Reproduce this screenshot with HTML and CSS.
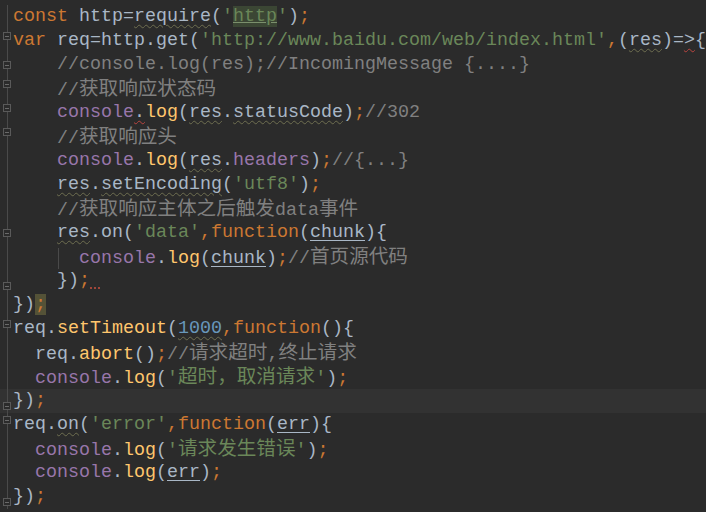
FILE: index.html
```html
<!DOCTYPE html>
<html lang="zh-CN">
<head>
  <meta charset="UTF-8">
  <title>http.get 示例</title>
  <link rel="stylesheet" href="styles.css">
</head>
<body>
  <div class="editor">
    <div class="ln"><span class="gut"></span><span class="code"><span class="kw">const </span>http=<span class="warn">require</span>(<span class="str">'<span class="hit">http</span>'</span>)<span class="kw">;</span></span></div>
    <div class="ln"><span class="gut top"><i class="fold"></i></span><span class="code"><span class="kw">var </span>req=http.get(<span class="str">'http://www.baidu.com/web/index.html'</span><span class="kw">,</span>(<span class="warn">res</span>)=<span class="err">&gt;</span>{</span></div>
    <div class="ln"><span class="gut mid"><i class="fold"></i></span><span class="code">    <span class="cm">//console.log(res);//IncomingMessage {....}</span></span></div>
    <div class="ln"><span class="gut top"><i class="fold"></i></span><span class="code">    <span class="cm">//<span class="zh">获取响应状态码</span></span></span></div>
    <div class="ln"><span class="gut top"><i class="fold"></i></span><span class="code">    <span class="obj">console</span><span class="err">.</span><span class="fn">log</span>(<span class="warn">res</span>.<span class="warn">statusCode</span>)<span class="kw">;</span><span class="cm">//302</span></span></div>
    <div class="ln"><span class="gut top"><i class="fold"></i></span><span class="code">    <span class="cm">//<span class="zh">获取响应头</span></span></span></div>
    <div class="ln"><span class="gut"></span><span class="code">    <span class="obj">console</span>.<span class="fn">log</span>(<span class="warn">res</span>.<span class="obj">headers</span>)<span class="kw">;</span><span class="cm">//{...}</span></span></div>
    <div class="ln"><span class="gut"></span><span class="code">    <span class="warn">res</span>.<span class="warn">setEncoding</span>(<span class="str">'utf8'</span>)<span class="kw">;</span></span></div>
    <div class="ln"><span class="gut"></span><span class="code">    <span class="cm">//<span class="zh">获取响应主体之后触发</span>data<span class="zh">事件</span></span></span></div>
    <div class="ln"><span class="gut mid"><i class="fold"></i></span><span class="code">    <span class="warn">res</span>.on(<span class="str">'data'</span><span class="kw">,function</span>(<span class="param">chunk</span>){</span></div>
    <div class="ln"><span class="gut"></span><span class="code">    <span class="guide"> </span> <span class="obj">console</span>.<span class="fn">log</span>(<span class="param">chunk</span>)<span class="kw">;</span><span class="cm">//<span class="zh">首页源代码</span></span></span></div>
    <div class="ln"><span class="gut bot"><i class="fold"></i></span><span class="code">    })<span class="kw">;</span><span class="errdot"> </span></span></div>
    <div class="ln"><span class="gut"></span><span class="code">})<span class="kw caret">;</span></span></div>
    <div class="ln"><span class="gut top"><i class="fold"></i></span><span class="code">req.<span class="fn">setTimeout</span>(<span class="num warn">1000</span><span class="kw">,function</span>(){</span></div>
    <div class="ln"><span class="gut"></span><span class="code">  req.<span class="fn">abort</span>()<span class="kw">;</span><span class="cm">//<span class="zh">请求超时</span>,<span class="zh">终止请求</span></span></span></div>
    <div class="ln"><span class="gut"></span><span class="code">  <span class="obj">console</span>.<span class="fn">log</span>(<span class="str">'<span class="zh">超时，取消请求</span>'</span>)<span class="kw">;</span></span></div>
    <div class="ln current"><span class="gut bot"><i class="fold"></i></span><span class="code">})<span class="kw">;</span></span></div>
    <div class="ln"><span class="gut top"><i class="fold"></i></span><span class="code">req.<span class="warn">on</span>(<span class="str">'error'</span><span class="kw">,function</span>(<span class="param">err</span>){</span></div>
    <div class="ln"><span class="gut"></span><span class="code">  <span class="obj">console</span>.<span class="fn">log</span>(<span class="str">'<span class="zh">请求发生错误</span>'</span>)<span class="kw">;</span></span></div>
    <div class="ln"><span class="gut"></span><span class="code">  <span class="obj">console</span>.<span class="fn">log</span>(<span class="param">err</span>)<span class="kw">;</span></span></div>
    <div class="ln"><span class="gut bot"><i class="fold"></i></span><span class="code">})<span class="kw">;</span></span></div>
  </div>
</body>
</html>
```

FILE: styles.css
```css
html, body {
  margin: 0;
  background-color: #2b2b2b;
}
body {
  height: 512px;
  overflow: hidden;
}
.editor {
  padding-top: 5px;
  font-family: "Liberation Mono", "Noto Sans CJK SC", monospace;
  font-size: 18.33px;
  color: #a9b7c6;
}
.ln {
  display: flex;
  height: 24px;
  line-height: 24px;
}
.ln.current {
  background-color: #323232;
}
.gut {
  width: 13px;
  flex: none;
  display: flex;
  align-items: center;
  background: linear-gradient(#4a4a4a, #4a4a4a) 7px 0 / 1px 100% no-repeat;
}
.gut.top {
  align-items: flex-start;
}
.gut.bot {
  align-items: flex-end;
}
.fold {
  display: block;
  width: 8px;
  height: 8px;
  margin: 3px 0 3px 3px;
  border: 1px solid #5a5a5a;
  background: linear-gradient(#6a6a6a, #6a6a6a) center / 4px 1px no-repeat #2b2b2b;
  box-sizing: border-box;
}
.code {
  white-space: pre;
}
.kw {
  color: #cc7832;
}
.str {
  color: #6a8759;
}
.cm {
  color: #808080;
}
.fn {
  color: #ffc66d;
}
.obj {
  color: #9876aa;
}
.num {
  color: #6897bb;
}
.zh {
  font-family: "Noto Sans CJK SC", sans-serif;
  font-size: 19.6px;
  line-height: 1;
}
.hit {
  background-color: #3b4634;
  text-decoration: underline;
  text-decoration-color: #7b8f6c;
}
.warn {
  text-decoration: underline wavy #6e6e50;
  text-decoration-thickness: 1px;
  text-underline-offset: 3px;
}
.err {
  text-decoration: underline wavy #b9443f;
  text-decoration-thickness: 1px;
  text-underline-offset: 3px;
}
.errdot {
  text-decoration: underline dotted #a0463a;
  text-decoration-thickness: 2px;
  text-underline-offset: 2px;
}
.param {
  text-decoration: underline;
  text-decoration-color: #a9b7c6;
  text-underline-offset: 3px;
}
.caret {
  background-color: #545237;
}
.guide {
  background: linear-gradient(#4a4a4a, #4a4a4a) 1px 0 / 1px 100% no-repeat;
}
```
